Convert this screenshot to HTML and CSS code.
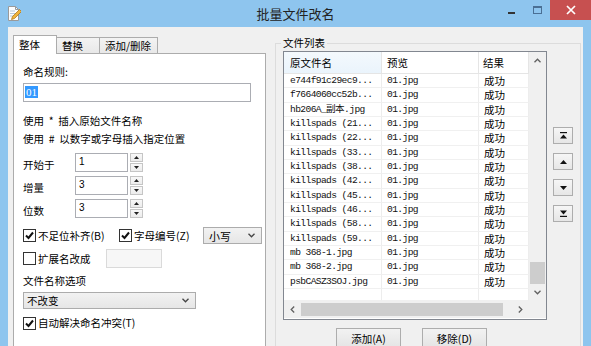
FILE: index.html
```html
<!DOCTYPE html>
<html>
<head>
<meta charset="utf-8">
<title>批量文件改名</title>
<link rel="stylesheet" href="styles.css">
</head>
<body>
<div class="win">
  <div class="titlebar">
    <svg class="appicon" width="14" height="17" viewBox="0 0 14 17">
      <path d="M1.5 1.5h7l3 3v11h-10z" fill="#fdfdfd" stroke="#9a9a9a"/>
      <path d="M8.5 1.5v3h3" fill="none" stroke="#9a9a9a"/>
      <path d="M3 6h5M3 8.5h6M3 11h4" stroke="#b8c8d8"/>
      <path d="M4.5 14.5l1-3 7-7 2 2-7 7z" fill="#f0b43c" stroke="#b07a20" stroke-width="0.8"/>
    </svg>
    <div class="title">批量文件改名</div>
    <div class="caps">
      <div class="cap"><span class="minline"></span></div>
      <div class="cap"><span class="maxbox"></span></div>
      <div class="cap close">
        <svg width="10" height="10" viewBox="0 0 10 10"><path d="M1 1L9 9M9 1L1 9" stroke="#fff" stroke-width="1.7"/></svg>
      </div>
    </div>
  </div>

  <div class="client">
    <div class="tabctl">
      <div class="tabs">
        <div class="tab active w44">整体</div>
        <div class="tab w43">替换</div>
        <div class="tab w58">添加/删除</div>
      </div>
      <div class="page">
        <div class="line">命名规则:</div>
        <div class="textbox rule"><span class="sel">01</span></div>
        <div class="line mt12">使用 &nbsp;* &nbsp;插入原始文件名称</div>
        <div class="line mt4">使用 &nbsp;# &nbsp;以数字或字母插入指定位置</div>

        <div class="spinrow first">
          <span class="spinlabel">开始于</span>
          <div class="textbox spinbox">1</div>
          <div class="spin">
            <div class="spinbtn"><svg width="5" height="3" viewBox="0 0 5 3"><path d="M0 3L2.5 0L5 3z" fill="#222"/></svg></div>
            <div class="spinbtn"><svg width="5" height="3" viewBox="0 0 5 3"><path d="M0 0L2.5 3L5 0z" fill="#222"/></svg></div>
          </div>
        </div>
        <div class="spinrow">
          <span class="spinlabel">增量</span>
          <div class="textbox spinbox">3</div>
          <div class="spin">
            <div class="spinbtn"><svg width="5" height="3" viewBox="0 0 5 3"><path d="M0 3L2.5 0L5 3z" fill="#222"/></svg></div>
            <div class="spinbtn"><svg width="5" height="3" viewBox="0 0 5 3"><path d="M0 0L2.5 3L5 0z" fill="#222"/></svg></div>
          </div>
        </div>
        <div class="spinrow">
          <span class="spinlabel">位数</span>
          <div class="textbox spinbox">3</div>
          <div class="spin">
            <div class="spinbtn"><svg width="5" height="3" viewBox="0 0 5 3"><path d="M0 3L2.5 0L5 3z" fill="#222"/></svg></div>
            <div class="spinbtn"><svg width="5" height="3" viewBox="0 0 5 3"><path d="M0 0L2.5 3L5 0z" fill="#222"/></svg></div>
          </div>
        </div>

        <div class="checkrow">
          <label class="check w96"><span class="box checked"><svg width="9" height="9" viewBox="0 0 9 9"><path d="M1 4.5L3.5 7L8 1.5" fill="none" stroke="#111" stroke-width="2"/></svg></span>不足位补齐(B)</label>
          <label class="check w84"><span class="box checked"><svg width="9" height="9" viewBox="0 0 9 9"><path d="M1 4.5L3.5 7L8 1.5" fill="none" stroke="#111" stroke-width="2"/></svg></span>字母编号(Z)</label>
          <div class="combo small"><span>小写</span><svg width="7" height="5" viewBox="0 0 7 5"><path d="M0.5 0.8L3.5 3.8L6.5 0.8" fill="none" stroke="#444" stroke-width="1.3"/></svg></div>
        </div>

        <div class="extrow">
          <label class="check w83"><span class="box"></span>扩展名改成</label>
          <div class="textbox ext"></div>
        </div>

        <div class="line mt6">文件名称选项</div>
        <div class="combo wide"><span>不改变</span><svg width="7" height="5" viewBox="0 0 7 5"><path d="M0.5 0.8L3.5 3.8L6.5 0.8" fill="none" stroke="#444" stroke-width="1.3"/></svg></div>

        <label class="check mt7"><span class="box checked"><svg width="9" height="9" viewBox="0 0 9 9"><path d="M1 4.5L3.5 7L8 1.5" fill="none" stroke="#111" stroke-width="2"/></svg></span>自动解决命名冲突(T)</label>
      </div>
    </div>

    <fieldset class="group">
      <legend>文件列表</legend>
      <div class="grouprow">
        <div class="listview">
          <div class="lvbody">
            <div class="lvhead">
              <div class="hc c1 hot">原文件名</div>
              <div class="hc c2">预览</div>
              <div class="hc c3">结果</div>
            </div>
            <div class="r"><div class="c c1 mono">e744f91c29ec9...</div><div class="c c2 mono">01.jpg</div><div class="c c3">成功</div></div>
            <div class="r"><div class="c c1 mono">f7664060cc52b...</div><div class="c c2 mono">01.jpg</div><div class="c c3">成功</div></div>
            <div class="r"><div class="c c1 mono">hb206A_副本.jpg</div><div class="c c2 mono">01.jpg</div><div class="c c3">成功</div></div>
            <div class="r"><div class="c c1 mono">killspads (21...</div><div class="c c2 mono">01.jpg</div><div class="c c3">成功</div></div>
            <div class="r"><div class="c c1 mono">killspads (22...</div><div class="c c2 mono">01.jpg</div><div class="c c3">成功</div></div>
            <div class="r"><div class="c c1 mono">killspads (33...</div><div class="c c2 mono">01.jpg</div><div class="c c3">成功</div></div>
            <div class="r"><div class="c c1 mono">killspads (38...</div><div class="c c2 mono">01.jpg</div><div class="c c3">成功</div></div>
            <div class="r"><div class="c c1 mono">killspads (42...</div><div class="c c2 mono">01.jpg</div><div class="c c3">成功</div></div>
            <div class="r"><div class="c c1 mono">killspads (45...</div><div class="c c2 mono">01.jpg</div><div class="c c3">成功</div></div>
            <div class="r"><div class="c c1 mono">killspads (46...</div><div class="c c2 mono">01.jpg</div><div class="c c3">成功</div></div>
            <div class="r"><div class="c c1 mono">killspads (58...</div><div class="c c2 mono">01.jpg</div><div class="c c3">成功</div></div>
            <div class="r"><div class="c c1 mono">killspads (59...</div><div class="c c2 mono">01.jpg</div><div class="c c3">成功</div></div>
            <div class="r"><div class="c c1 mono">mb 368-1.jpg</div><div class="c c2 mono">01.jpg</div><div class="c c3">成功</div></div>
            <div class="r"><div class="c c1 mono">mb 368-2.jpg</div><div class="c c2 mono">01.jpg</div><div class="c c3">成功</div></div>
            <div class="r"><div class="c c1 mono">psbCASZ3SOJ.jpg</div><div class="c c2 mono">01.jpg</div><div class="c c3">成功</div></div>
            <div class="r empty"><div class="c c1"></div><div class="c c2"></div><div class="c c3"></div></div>
          </div>
          <div class="vscroll">
            <div class="arrow"><svg width="7" height="5" viewBox="0 0 7 5"><path d="M0.5 4.2L3.5 1.2L6.5 4.2" fill="none" stroke="#606060" stroke-width="1.3"/></svg></div>
            <div class="vtrack"><div class="vthumb"></div></div>
            <div class="arrow"><svg width="7" height="5" viewBox="0 0 7 5"><path d="M0.5 0.8L3.5 3.8L6.5 0.8" fill="none" stroke="#606060" stroke-width="1.3"/></svg></div>
          </div>
          <div class="hscroll">
            <div class="arrow"><svg width="5" height="7" viewBox="0 0 5 7"><path d="M4.2 0.5L1.2 3.5L4.2 6.5" fill="none" stroke="#606060" stroke-width="1.3"/></svg></div>
            <div class="htrack"><div class="hthumb"></div></div>
            <div class="arrow"><svg width="5" height="7" viewBox="0 0 5 7"><path d="M0.8 0.5L3.8 3.5L0.8 6.5" fill="none" stroke="#606060" stroke-width="1.3"/></svg></div>
          </div>
          <div class="corner"></div>
        </div>
        <div class="movebtns">
          <div class="mbtn"><svg width="7" height="7" viewBox="0 0 7 7"><path d="M0 0h7v1.2H0z" fill="#111"/><path d="M0 6.5L3.5 2.5L7 6.5z" fill="#111"/></svg></div>
          <div class="mbtn"><svg width="7" height="4" viewBox="0 0 7 4"><path d="M0 4L3.5 0L7 4z" fill="#111"/></svg></div>
          <div class="mbtn"><svg width="7" height="4" viewBox="0 0 7 4"><path d="M0 0L3.5 4L7 0z" fill="#111"/></svg></div>
          <div class="mbtn"><svg width="7" height="7" viewBox="0 0 7 7"><path d="M0 0.5L3.5 4.5L7 0.5z" fill="#111"/><path d="M0 5.8h7V7H0z" fill="#111"/></svg></div>
        </div>
      </div>
      <div class="actions">
        <div class="btn">添加(A)</div>
        <div class="btn">移除(D)</div>
      </div>
    </fieldset>
  </div>
</div>
</body>
</html>
```

FILE: styles.css
```css
* { box-sizing: border-box; }
html, body { margin: 0; padding: 0; }
body {
  width: 591px;
  height: 346px;
  overflow: hidden;
  background: #8ec5ee;
  font-family: "Noto Sans CJK SC", "Noto Sans", sans-serif;
  font-size: 10.5px;
  line-height: 14px;
  color: #000;
}
.win {
  width: 591px;
  height: 346px;
  background: #8ec5ee;
  display: flex;
  flex-direction: column;
  overflow: hidden;
}

/* title bar */
.titlebar {
  height: 27px;
  flex: none;
  display: grid;
  grid-template-columns: 1fr auto 1fr;
  align-items: start;
}
.appicon { margin: 5px 0 0 7px; }
.title {
  font-size: 13px;
  line-height: 27px;
  color: #222;
}
.caps { justify-self: end; display: flex; height: 20px; }
.cap {
  width: 26px;
  height: 20px;
  display: flex;
  align-items: center;
  justify-content: center;
}
.cap.close { width: 41px; background: #c75050; }
.minline { width: 7px; height: 2px; background: #333; margin-top: 6px; }
.maxbox {
  width: 9px;
  height: 8px;
  border: 1px solid #4a6f94;
  border-top-width: 2px;
  margin-top: -1px;
}

/* client */
.client {
  flex: 1;
  margin: 0 8px;
  background: #f0f0f0;
  display: flex;
  align-items: flex-start;
  overflow: hidden;
}

/* tab control */
.tabctl { margin: 8px 0 0 5px; width: 253px; flex: none; }
.tabs { display: flex; align-items: flex-end; height: 18px; position: relative; z-index: 1; }
.tab {
  height: 16px;
  padding-left: 5px;
  border: 1px solid #acacac;
  border-bottom: none;
  background: linear-gradient(#f3f3f3, #e8e8e8);
  line-height: 15px;
  margin-left: -1px;
}
.tab:first-child { margin-left: 0; }
.tab.active {
  height: 19px;
  margin-bottom: -1px;
  background: #fff;
  line-height: 17px;
  position: relative;
  z-index: 2;
}
.w44 { width: 44px; }
.w43 { width: 44px; }
.w58 { width: 59px; }

.page {
  height: 300px;
  border: 1px solid #acacac;
  background: #fff;
  padding: 11px 0 0 9px;
  display: flex;
  flex-direction: column;
  align-items: flex-start;
}
.line { height: 14px; white-space: nowrap; }
.mt4 { margin-top: 4px; }
.mt6 { margin-top: 6px; }
.mt7 { margin-top: 7px; }
.mt12 { margin-top: 12px; }

.textbox {
  border: 1px solid #abadb3;
  background: #fff;
  height: 19px;
}
.rule {
  width: 228px;
  height: 19px;
  margin-top: 4px;
  padding: 2px 0 0 1px;
  font-family: "Liberation Serif", serif;
  font-size: 11px;
  line-height: 13px;
}
.sel { background: #3399ff; color: #fff; padding: 0 1px; }

.spinrow { display: flex; align-items: flex-start; height: 19px; margin-top: 4px; }
.spinrow.first { margin-top: 7px; }
.spinlabel { width: 52px; line-height: 19px; padding-top: 2px; }
.spinbox {
  width: 53px;
  height: 19px;
  padding: 1px 0 0 3px;
  font-family: "Liberation Sans", sans-serif;
  font-size: 10px;
  line-height: 14px;
}
.spin { margin-left: 2px; display: flex; flex-direction: column; gap: 1px; }
.spinbtn {
  width: 13px;
  height: 9px;
  border: 1px solid #c5c5c5;
  background: linear-gradient(#f8f8f8, #ececec);
  display: flex;
  align-items: center;
  justify-content: center;
}

.checkrow { display: flex; align-items: center; height: 17px; margin-top: 9px; }
.check { display: flex; align-items: center; white-space: nowrap; height: 14px; }
.w96 { width: 96px; }
.w84 { width: 84px; }
.w83 { width: 83px; }
.box {
  width: 13px;
  height: 13px;
  border: 1px solid #333;
  background: #fff;
  margin-right: 2px;
  display: flex;
  align-items: center;
  justify-content: center;
  flex: none;
}
.combo {
  height: 17px;
  border: 1px solid #acacac;
  background: linear-gradient(#f2f2f2, #e6e6e6);
  display: flex;
  align-items: center;
  justify-content: space-between;
  padding: 0 6px 0 3px;
}
.combo.small { width: 59px; font-size: 11px; padding-left: 5px; }
.combo.wide { width: 173px; margin-top: 4px; }

.extrow { display: flex; align-items: center; height: 19px; margin-top: 5px; }
.textbox.ext { width: 56px; background: #f7f7f7; border-color: #dadada; }

/* group box */
.group {
  margin: 9px 0 0 9px;
  width: 306px;
  min-width: 0;
  height: 330px;
  border: 1px solid #dcdcdc;
  padding: 0 6px 0 7px;
  flex: none;
}
.group legend {
  padding: 0 2px;
  margin-left: -2px;
  line-height: 14px;
  font-size: 10.5px;
}
.grouprow { display: flex; margin-top: 1px; }

.listview {
  width: 264px;
  height: 269px;
  border: 1px solid #828790;
  background: #fff;
  display: grid;
  grid-template-columns: 245px 17px;
  grid-template-rows: 249px 17px;
}
.lvbody { overflow: hidden; }
.lvhead { display: flex; height: 22px; border-bottom: 1px solid #e5e5e5; }
.hc {
  line-height: 21px;
  padding-left: 6px;
  border-right: 1px solid #e5e5e5;
  background: #fff;
}
.hc.hot { background: linear-gradient(#f4f9fd, #eaf4fc); }
.c1 { width: 98px; }
.c2 { width: 97px; }
.c3 { width: 50px; }
.hc.c2 { padding-left: 5px; }
.hc.c3 { padding-left: 4px; }
.r { display: flex; height: 14.33px; }
.c {
  border-right: 1px solid #ededed;
  border-bottom: 1px solid #f0f0f0;
  padding-left: 6px;
  line-height: 14px;
  white-space: nowrap;
  overflow: hidden;
}
.c.c2 { padding-left: 5px; }
.c.c3 { padding-left: 5px; font-size: 10.5px; line-height: 13px; }
.mono {
  font-family: "Liberation Mono", "Noto Sans CJK SC", monospace;
  font-size: 9.6px;
  letter-spacing: -0.6px;
  color: #111;
}
.r.empty { height: 12px; }

.vscroll {
  grid-row: 1;
  grid-column: 2;
  background: #f0f0f0;
  display: flex;
  flex-direction: column;
}
.arrow {
  width: 17px;
  height: 17px;
  flex: none;
  display: flex;
  align-items: center;
  justify-content: center;
}
.vtrack { flex: 1; display: flex; flex-direction: column; justify-content: flex-end; padding: 0 1px 0; }
.vthumb { height: 22px; background: #cdcdcd; }
.hscroll {
  grid-row: 2;
  grid-column: 1;
  background: #f0f0f0;
  display: flex;
}
.htrack { flex: 1; padding: 2px 0 1px 0; }
.hthumb { width: 202px; height: 13px; background: #cdcdcd; }
.corner { grid-row: 2; grid-column: 2; background: #f0f0f0; }

.movebtns {
  margin-left: 6px;
  padding-top: 76px;
  display: flex;
  flex-direction: column;
  gap: 9px;
}
.mbtn {
  width: 20px;
  height: 17px;
  border: 1px solid #adadad;
  background: linear-gradient(#f6f6f6, #e6e6e6);
  display: flex;
  align-items: center;
  justify-content: center;
}

.actions { display: flex; gap: 21px; margin-top: 8px; padding-left: 53px; }
.btn {
  width: 65px;
  height: 21px;
  border: 1px solid #adadad;
  background: linear-gradient(#f2f2f2, #e4e4e4);
  text-align: center;
  line-height: 19px;
}
```
